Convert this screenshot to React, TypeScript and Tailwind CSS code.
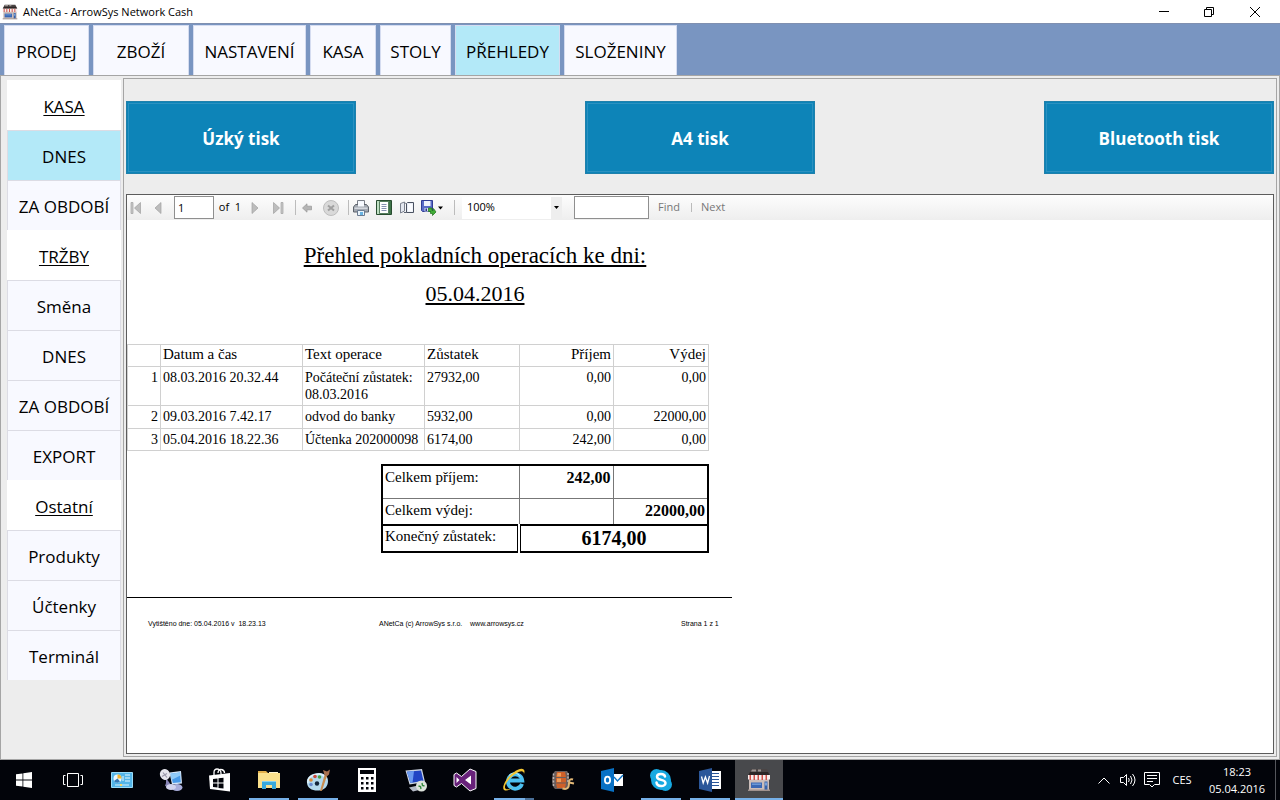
import type { ReactNode } from "react";

const tabs = [
  { label: "PRODEJ", width: "w-[85px]" },
  { label: "ZBOŽÍ", width: "w-24" },
  { label: "NASTAVENÍ", width: "w-[113px]" },
  { label: "KASA", width: "w-[66px]" },
  { label: "STOLY", width: "w-[71px]" },
  { label: "PŘEHLEDY", width: "w-[105px]", active: true },
  { label: "SLOŽENINY", width: "w-[113px]" },
];

const sidebar = [
  { title: "KASA", items: ["DNES", "ZA OBDOBÍ"], active: "DNES" },
  { title: "TRŽBY", items: ["Směna", "DNES", "ZA OBDOBÍ", "EXPORT"] },
  { title: "Ostatní", items: ["Produkty", "Účtenky", "Terminál"] },
];

const rows = [
  ["1", "08.03.2016 20.32.44", "Počáteční zůstatek: 08.03.2016", "27932,00", "0,00", "0,00"],
  ["2", "09.03.2016 7.42.17", "odvod do banky", "5932,00", "0,00", "22000,00"],
  ["3", "05.04.2016 18.22.36", "Účtenka 202000098", "6174,00", "242,00", "0,00"],
];

function ShopIcon({ className }: { className: string }) {
  return (
    <svg viewBox="0 0 24 24" className={className} aria-hidden="true">
      <path d="M4 1h16l3 6H1z" fill="#4a4444" />
      <path d="M3 4h18l1.5 3h-21z" fill="#2c2626" />
      <path d="M5 1.5h4v2H4zM11 1.5h3v2h-3z" fill="#9d9592" />
      <path d="M2 11h20v11H2z" fill="#cbbdb9" />
      <path d="M1 7h22v4.500H1z" fill="#f7eeee" />
      <path d="M2.500 7h1.500v5h-1.500zM6.500 7H8v5H6.500zM10.500 7H12v5h-1.500zM14.500 7H16v5h-1.500zM18.500 7H20v5h-1.500z" fill="#cf5149" />
      <path d="M4 14.500h11V20H4z" fill="#3a68b4" />
      <path d="M5 15.500h9v1.500H5z" fill="#6a98d6" />
      <path d="M17.500 13.500h3V22h-3z" fill="#3762a8" />
      <path d="M18 14.500h2v3h-2z" fill="#7aa3da" />
      <path d="M1 21.500h22V23H1z" fill="#a0928e" />
    </svg>
  );
}

function TitleBar() {
  return (
    <header className="flex h-[23px] items-center bg-white">
      <ShopIcon className="ml-[2px] h-4 w-4" />
      <h1 className="ml-[5px] flex-1 text-[11px] leading-4">ANetCa - ArrowSys Network Cash</h1>
      <button aria-label="Minimize" className="flex h-full w-12 items-center justify-center">
        <svg viewBox="0 0 10 10" className="h-[10px] w-[10px]"><path d="M0 4.500h10" stroke="#000" /></svg>
      </button>
      <button aria-label="Restore" className="flex h-full w-[42px] items-center justify-center">
        <svg viewBox="0 0 10 10" className="h-[10px] w-[10px]"><path d="M.5 2.500h7v7h-7zM2.500 2.500v-2h7v7h-2" fill="none" stroke="#000" /></svg>
      </button>
      <button aria-label="Close" className="flex h-full w-[50px] items-center justify-center">
        <svg viewBox="0 0 10 10" className="h-[10px] w-[10px]"><path d="M0 0l10 10M10 0L0 10" stroke="#000" /></svg>
      </button>
    </header>
  );
}

function Tabs() {
  return (
    <nav className="flex h-[52px] gap-1 border-t border-[#8090b0] bg-[#7995c1] pl-1 pt-px">
      {tabs.map((t) => (
        <button
          key={t.label}
          className={`${t.width} border-x border-t border-[#d5dcf0] pt-[2px] text-[17px] ${t.active ? "bg-[#b3e9f8]" : "bg-[#f8f9ff]"}`}
        >
          {t.label}
        </button>
      ))}
    </nav>
  );
}

function Sidebar() {
  return (
    <aside className="w-[114px] shrink-0 pt-1">
      {sidebar.map((group) => (
        <section key={group.title}>
          <h2 className="flex h-[50px] items-center justify-center bg-white pt-[3px] text-[17px] underline underline-offset-2">
            {group.title}
          </h2>
          {group.items.map((item) => (
            <button
              key={item}
              className={`block h-[50px] w-full border-x border-t border-[#dcdce4] pt-[2px] text-[17px] ${item === group.active ? "bg-[#b3e9f8]" : "bg-[#f8f9ff]"}`}
            >
              {item}
            </button>
          ))}
        </section>
      ))}
    </aside>
  );
}

function PrintButton({ children }: { children: ReactNode }) {
  return (
    <button className="h-[73px] w-[230px] border border-[#1f80ab] bg-[#0d84b8] p-px text-[17px] font-bold text-white">
      <span className="flex h-full items-center justify-center border border-[#2c91c0] pt-[2px]">{children}</span>
    </button>
  );
}

function Tool({ label, width, children }: { label: string; width: string; children: ReactNode }) {
  return (
    <button aria-label={label} className={`flex h-full shrink-0 items-center justify-center ${width}`}>
      {children}
    </button>
  );
}

function Separator({ width }: { width: string }) {
  return (
    <span className={`flex shrink-0 justify-center ${width}`}>
      <span className="h-[15px] w-px bg-[#bcbcbc]" />
    </span>
  );
}

function Toolbar() {
  return (
    <div className="flex h-[25px] items-center bg-gradient-to-b from-[#fdfdfd] to-[#eeeeee] text-[11px]">
      <Tool label="First page" width="w-[18px]">
        <svg viewBox="0 0 12 12" className="h-3 w-3"><path d="M1 .5h2v11H1z" fill="#c8c8c8" stroke="#a0a0a0" strokeWidth=".7" /><path d="M10.500 .5v11L4.500 6z" fill="#bdbdbd" stroke="#a0a0a0" strokeWidth=".7" /></svg>
      </Tool>
      <Tool label="Previous page" width="w-[26px]">
        <svg viewBox="0 0 12 12" className="h-3 w-3"><path d="M9 .5v11L3 6z" fill="#bdbdbd" stroke="#a0a0a0" strokeWidth=".7" /></svg>
      </Tool>
      <input aria-label="Page number" defaultValue="1" className="ml-[3px] h-[23px] w-10 border border-[#8f8f8f] bg-white px-[3px]" />
      <span className="w-8 whitespace-pre text-center">of  1</span>
      <Tool label="Next page" width="w-[18px]">
        <svg viewBox="0 0 12 12" className="h-3 w-3"><path d="M3 .5v11L9 6z" fill="#bdbdbd" stroke="#a0a0a0" strokeWidth=".7" /></svg>
      </Tool>
      <Tool label="Last page" width="w-7">
        <svg viewBox="0 0 12 12" className="h-3 w-3"><path d="M9 .5h2v11H9z" fill="#c8c8c8" stroke="#a0a0a0" strokeWidth=".7" /><path d="M1.500 .5v11L7.500 6z" fill="#bdbdbd" stroke="#a0a0a0" strokeWidth=".7" /></svg>
      </Tool>
      <Separator width="w-[6px]" />
      <Tool label="Back to parent report" width="w-[18px]">
        <svg viewBox="0 0 10 10" className="h-[10px] w-[10px]"><path d="M.5 5L5 .8v2.400h4.500v3.600H5v2.400z" fill="#b5b5b5" stroke="#969696" strokeWidth=".7" /></svg>
      </Tool>
      <Tool label="Stop" width="w-[30px]">
        <svg viewBox="0 0 16 16" className="h-4 w-4"><circle cx="8" cy="8" r="7.500" fill="#d9d9d9" stroke="#bdbdbd" /><path d="M5 5.500l6 5M11 5.500l-6 5" stroke="#a0a0a0" strokeWidth="2" /></svg>
      </Tool>
      <Separator width="w-1" />
      <Tool label="Print" width="w-[22px]">
        <svg viewBox="0 0 16 16" className="h-4 w-4">
          <path d="M4.500 .5h7v6h-7z" fill="#f2f6fc" stroke="#7a7f88" />
          <path d="M.5 7l2-2.500h11l2 2.500v5H.5z" fill="#a3a9b2" stroke="#5d636c" />
          <path d="M5 2h6v4.500H5z" fill="#f7faff" />
          <path d="M1.500 7.500h13V9h-13z" fill="#d4d8df" />
          <path d="M4.500 10.500h7v5h-7z" fill="#e8f3fb" stroke="#6b7b90" />
          <path d="M7 12h3v3H7z" fill="#69b3e2" />
        </svg>
      </Tool>
      <Tool label="Print layout" width="w-6">
        <svg viewBox="0 0 16 16" className="h-4 w-4">
          <path d="M.5 .5h15v14H.5z" fill="#6fa878" stroke="#284c30" />
          <path d="M1 1h2.500v13H1z" fill="#bfe0c3" />
          <path d="M12.500 1H15v13h-2.500z" fill="#3f7449" />
          <path d="M3.500 1.500h9v12h-9z" fill="#fff" stroke="#567e5e" />
          <path d="M5.500 4.500h5M5.500 6.500h5M5.500 8.500h5M5.500 10.500h5" stroke="#8490b0" />
        </svg>
      </Tool>
      <Tool label="Page setup" width="w-[22px]">
        <svg viewBox="0 0 16 16" className="h-4 w-4">
          <path d="M1.500 3.500l4-1.500v9l-4 2z" fill="#e4e8f0" stroke="#7c828f" />
          <path d="M5.500 2.500l2 1.500v8" fill="none" stroke="#7c828f" />
          <path d="M7.500 3.500l1-1h6v10h-7z" fill="#e9edf6" stroke="#4b5261" />
          <path d="M9 4h4.500v7.500H9z" fill="#fbfcff" />
          <path d="M5 12.500h2.500" stroke="#5b6272" />
        </svg>
      </Tool>
      <Tool label="Export" width="w-7">
        <svg viewBox="0 0 24 16" className="h-4 w-6">
          <path d="M1.500 .5h11v11h-10l-1-1z" fill="#5a6cc8" stroke="#303d94" />
          <path d="M4 1h6.500v5H4z" fill="#eef2fc" />
          <path d="M4.500 8h5v3.500h-5z" fill="#d6dcf0" />
          <path d="M5.500 8.500H7V11H5.500z" fill="#28358a" />
          <path d="M8.500 8h3.500v2.500h1.500V8.500L16 12l-3.500 3.500v-2h-2v-2h-2z" fill="#3fae35" stroke="#1e6f1a" strokeWidth=".7" />
          <path d="M18 6.500h5l-2.500 3z" fill="#000" />
        </svg>
      </Tool>
      <Separator width="w-4" />
      <div className="relative w-[100px]">
        <select aria-label="Zoom" className="block h-[22px] w-full appearance-none bg-white px-[5px] text-[11px]">
          <option>100%</option>
        </select>
        <span className="pointer-events-none absolute inset-y-0 right-0 flex w-[11px] items-center justify-center bg-[#eeeeee]">
          <svg viewBox="0 0 5 3" className="h-[3px] w-[5px]"><path d="M0 0h5L2.500 3z" /></svg>
        </span>
      </div>
      <input aria-label="Search text" className="ml-3 h-[23px] w-[75px] border border-[#8f8f8f] bg-white px-1" />
      <button className="ml-[9px] text-[#777]">Find</button>
      <span className="ml-[11px] h-[9px] w-px bg-[#bbb]" />
      <button className="ml-[9px] text-[#777]">Next</button>
    </div>
  );
}

function Report() {
  const cell = "border border-[#d0d0d0] px-[2px] align-top font-normal";
  const head = `${cell} pt-px text-[15px]`;
  const total = "border border-[#777] pt-[3px] align-top";
  return (
    <div className="w-[605px] font-['Liberation_Serif',serif]">
      <h2 className="ml-[175px] mt-[17px] w-[346px] text-center text-[22px] leading-[38px] underline underline-offset-2">
        <span className="flex justify-center whitespace-nowrap text-[23px] underline">Přehled pokladních operacích ke dni:</span>
        05.04.2016
      </h2>
      <table className="mt-[31px] w-[582px] table-fixed border-collapse text-[14px] leading-[17px]">
        <colgroup>
          <col className="w-[33px]" />
          <col className="w-[142px]" />
          <col className="w-[122px]" />
          <col className="w-[95px]" />
          <col className="w-[94px]" />
          <col className="w-[95px]" />
        </colgroup>
        <thead>
          <tr className="h-[22px]">
            <th className={head} />
            <th className={`${head} text-left`}>Datum a čas</th>
            <th className={`${head} text-left`}>Text operace</th>
            <th className={`${head} text-left`}>Zůstatek</th>
            <th className={`${head} text-right`}>Příjem</th>
            <th className={`${head} text-right`}>Výdej</th>
          </tr>
        </thead>
        <tbody>
          {rows.map((r, n) => (
            <tr key={r[0]} className={n === 0 ? "h-[39px]" : n === 1 ? "h-[23px]" : "h-[22px]"}>
              {r.map((text, i) => (
                <td key={i} className={`${cell} pt-[2px] ${i === 0 || i > 3 ? "text-right" : "text-left"}`}>{text}</td>
              ))}
            </tr>
          ))}
        </tbody>
      </table>
      <table className="ml-[254px] mt-[13px] w-[327px] table-fixed border-collapse border-2 border-black text-[15px] leading-[17px]">
        <colgroup>
          <col className="w-[137px]" />
          <col className="w-[94px]" />
          <col className="w-[95px]" />
        </colgroup>
        <tbody>
          <tr className="h-[33px]">
            <th className={`${total} px-[2px] text-left font-normal`}>Celkem příjem:</th>
            <td className={`${total} px-[2px] text-right text-[16px] font-bold`}>242,00</td>
            <td className={total} />
          </tr>
          <tr className="h-[27px]">
            <th className={`${total} px-[2px] text-left font-normal`}>Celkem výdej:</th>
            <td className={total} />
            <td className={`${total} px-[2px] text-right text-[16px] font-bold`}>22000,00</td>
          </tr>
          <tr className="h-[27px] border-t-2 border-black">
            <th className="px-[2px] pt-[2px] text-left align-top font-normal">Konečný zůstatek:</th>
            <td colSpan={2} className="border-l-4 border-double border-black pb-px text-center text-[20px] font-bold leading-[22px]">6174,00</td>
          </tr>
        </tbody>
      </table>
      <footer className="mt-11 flex border-t border-black pl-[21px] pt-[21px] font-['Liberation_Sans',sans-serif] text-[7px] leading-[9px]">
        <span className="w-[231px] whitespace-pre">Vytištěno dne: 05.04.2016 v  18.23.13</span>
        <span className="w-[302px] whitespace-pre">ANetCa (c) ArrowSys s.r.o.    www.arrowsys.cz</span>
        <span>Strana 1 z 1</span>
      </footer>
    </div>
  );
}

const apps: { name: string; state?: "open" | "split" | "active"; icon: ReactNode }[] = [
  {
    name: "Start",
    icon: <svg viewBox="0 0 16 16" className="h-4 w-4"><path d="M0 2.300l6.500-.9v6.200H0zM7.300 1.300L16 0v7.600H7.300zM0 8.400h6.500v6.200L0 13.700zM7.300 8.400H16V16l-8.700-1.300z" fill="#fff" /></svg>,
  },
  {
    name: "Task view",
    icon: <svg viewBox="0 0 20 14" className="h-[14px] w-5"><path d="M4.500 .5h11v13h-11zM2.500 2.500h-2v9h2M17.500 2.500h2v9h-2" fill="none" stroke="#fff" /></svg>,
  },
  {
    name: "Control panel",
    icon: (
      <svg viewBox="0 0 22 16" className="h-4 w-[22px]">
        <path d="M.5 .5h21v15H.5z" fill="#53b5e8" stroke="#9bdcf8" />
        <circle cx="6.500" cy="6.500" r="4" fill="#e9f8ff" />
        <path d="M6.500 2.500v4h4a4 4 0 0 0-4-4" fill="#f5b52d" />
        <path d="M6.500 6.500L3 9a4 4 0 0 0 6 .5z" fill="#3377b5" />
        <path d="M14 3h5M14 6h5M14 9h5M12 9V4" stroke="#e6f7ff" fill="none" />
        <path d="M4 13h14" stroke="#d8f1fc" />
        <path d="M9 12h2v2H9z" fill="#f7d76a" />
      </svg>
    ),
  },
  {
    name: "Network device",
    icon: (
      <svg viewBox="0 0 24 24" className="h-6 w-6">
        <ellipse cx="18" cy="19.500" rx="5.500" ry="3.500" fill="#a9aedb" />
        <path d="M10.500 4.500L22 3l1 12.500-10 1z" fill="#d5e7fb" />
        <path d="M11.500 5.700L21 4.400l.8 9.800-8 .9z" fill="#489ae8" />
        <path d="M11.500 5.700L21 4.400l.3 3-8.900 4.500z" fill="#8fcaf8" />
        <path d="M7 10l4 5.500 2 4.500-7-2 1-3z" fill="#8785b6" />
        <ellipse cx="6" cy="6.500" rx="5" ry="5.500" transform="rotate(-30 6 6.500)" fill="#e6e5ec" />
        <path d="M4 4.500l4 5M3 8.500l5-3" stroke="#9b98aa" strokeWidth="1.200" />
        <ellipse cx="12" cy="19" rx="5" ry="3" fill="#d2d4ee" />
      </svg>
    ),
  },
  {
    name: "Store",
    icon: (
      <svg viewBox="0 0 22 24" className="h-6 w-[22px]">
        <path d="M5 7V4.500C5 2 6.500 1 8 1s4 1 4 4v1M9 5c0-3 2-4 3.500-3.500C15 2 15.500 4 15.500 5" fill="none" stroke="#fff" strokeWidth="1.300" />
        <path d="M0 7.500L21 5v18.500L1 21z" fill="#fff" />
        <path d="M4 11l4.500-.5v4H4zM9.500 10.300l5-.6v4.800h-5zM4 15.500h4.500v4L4 19zM9.500 15.500h5v5l-5-.6z" fill="#02040a" />
      </svg>
    ),
  },
  {
    name: "File Explorer",
    state: "open",
    icon: (
      <svg viewBox="0 0 22 20" className="h-5 w-[22px]">
        <path d="M0 1h8l2 2h11v3H0z" fill="#e3b04b" />
        <path d="M0 3h22v15H0z" fill="#fae08c" />
        <path d="M11 2h9v1h-9z" fill="#fff6d5" />
        <path d="M4 19v-8h14v8h-4v-4H8v4z" fill="#38a9dc" />
        <path d="M4 11h14v1H4z" fill="#85d2ef" />
      </svg>
    ),
  },
  {
    name: "Paint",
    state: "open",
    icon: (
      <svg viewBox="0 0 24 24" className="h-6 w-6">
        <path d="M1 15C0 9 6 5 13 5c6 0 9 4 9 8 0 5-3 9-9 9.500C6 23 1.500 20 1 15" fill="#b3d9ee" />
        <path d="M2 15C1 9.500 7 6 13 6c4 0 7 3 7 6" fill="none" stroke="#e3f4fd" strokeWidth="1.500" />
        <circle cx="5" cy="12" r="1.800" fill="#dd8a35" />
        <circle cx="9" cy="8.500" r="1.800" fill="#ce4a3b" />
        <circle cx="13.500" cy="9" r="1.800" fill="#4a9f46" />
        <circle cx="5" cy="16.500" r="1.800" fill="#6a8bd0" />
        <circle cx="11" cy="15.500" r="2.200" fill="#10233a" />
        <path d="M14 23l4.500-16 2.500 .8-5 15z" fill="#c98d50" />
        <path d="M18.500 7l-1.500-5 4 1.500 3-2-1 5-2.300 2z" fill="#a8704f" />
      </svg>
    ),
  },
  {
    name: "Calculator",
    icon: (
      <svg viewBox="0 0 18 24" className="h-6 w-[18px]">
        <path d="M0 0h18v24H0z" fill="#fff" />
        <path d="M2 2h14v4H2zM3 9h2.500v2.500H3zM8 9h2.500v2.500H8zM13 9h2.500v2.500H13zM3 14h2.500v2.500H3zM8 14h2.500v2.500H8zM13 14h2.500v2.500H13zM3 19h2.500v2.500H3zM8 19h2.500v2.500H8zM13 19h2.500v2.500H13z" fill="#02040a" />
      </svg>
    ),
  },
  {
    name: "Remote Desktop",
    icon: (
      <svg viewBox="0 0 24 24" className="h-6 w-6">
        <path d="M1.500 2.500L18 1l3 13-15.500 2.500z" fill="#cbd4e2" />
        <path d="M3 3.700l14-1.300 2.500 10.400L6.500 15z" fill="#2145c4" />
        <path d="M3 3.700l7-.7-1.500 11.700-2 .3z" fill="#6b9bf0" />
        <path d="M5 19.500l9-2 3 4-8 2z" fill="#b4bac6" />
        <circle cx="17.500" cy="18" r="5.500" fill="#dde3dc" />
        <path d="M14.500 18l2 .5 .5 2.500M20.500 18l-2-.5-.5-2.500" stroke="#338b3e" strokeWidth="1.400" fill="none" />
      </svg>
    ),
  },
  {
    name: "Visual Studio",
    icon: (
      <svg viewBox="0 0 24 24" className="h-6 w-6">
        <path d="M17 1l6 2.500v17L17 23l-8.500-7.500-5 3.500L1 17.500v-11L3.500 5l5 3.500z" fill="#68217a" stroke="#fff" />
        <path d="M18 7.500v9L12 12zM3.500 9v6L6.500 12z" fill="#fff" />
      </svg>
    ),
  },
  {
    name: "Internet Explorer",
    state: "split",
    icon: (
      <svg viewBox="0 0 24 24" className="h-6 w-6">
        <path d="M20 15.800A7.200 7.200 0 1 1 20.300 12.500H7" fill="none" stroke="#4cc0f1" strokeWidth="3.800" />
        <path d="M7 7.500c3-3.500 9-3 11 1" fill="none" stroke="#c4efff" />
        <path d="M3 22.500C-1.500 21.500 3 10.500 11.500 4.500 17 0 22.500-.5 22.500 3.500c0 1-.2 1.800-.5 2.500C22 3 19 2 14 5.500 6 10 .5 19.500 4 21c2 .8 5-.5 7-2-3 3-6 4-8 3.500" fill="#f4c532" />
      </svg>
    ),
  },
  {
    name: "Movie Maker",
    icon: (
      <svg viewBox="0 0 24 20" className="h-5 w-6">
        <path d="M4 1h12l2 3v12l-2 3H4c-4-3-4-14 0-18" fill="#6a5d5b" />
        <path d="M6 2h8l1 5H5zM5 8h10v4.500H5zM5 13.500h10L14 18H6z" fill="#cf6029" />
        <path d="M6.500 3H10v3.500H6zM6 8.500h4v3.500H6z" fill="#ee9c58" />
        <path d="M2.500 3.500v13M17 3v9" stroke="#b9b5b5" strokeWidth="1.500" strokeDasharray="2 1.500" />
        <path d="M11.500 18.500c5 1.500 6.500-1 6.500-5s1.500-5 4-4M18 12.500l5 1" fill="none" stroke="#e2b877" strokeWidth="2" />
      </svg>
    ),
  },
  {
    name: "Outlook",
    icon: (
      <svg viewBox="0 0 24 24" className="h-6 w-6">
        <path d="M13 6h10v12H13z" fill="#fff" />
        <path d="M14 9l3.500 4 5.500-6" fill="none" stroke="#0871c5" strokeWidth="1.300" />
        <path d="M1 3l13-3v24L1 21z" fill="#0871c5" />
        <ellipse cx="7.500" cy="12" rx="2.600" ry="3.400" fill="none" stroke="#fff" strokeWidth="1.800" />
      </svg>
    ),
  },
  {
    name: "Skype",
    state: "open",
    icon: (
      <svg viewBox="0 0 24 24" className="h-6 w-6">
        <circle cx="12" cy="12" r="10" fill="#17a9e1" />
        <circle cx="7.500" cy="7.500" r="6.500" fill="#17a9e1" />
        <circle cx="16.500" cy="16.500" r="6.500" fill="#17a9e1" />
        <path d="M16 8.500C15.500 5 8 5 8 8.700c0 4.300 8.500 2 8.500 6.300 0 4-8.500 4-9-.5" fill="none" stroke="#fff" strokeWidth="2.500" strokeLinecap="round" />
      </svg>
    ),
  },
  {
    name: "Word",
    state: "open",
    icon: (
      <svg viewBox="0 0 24 24" className="h-6 w-6">
        <path d="M12 3h11v18H12z" fill="#fff" />
        <path d="M14 5.500h7M14 8.500h7M14 11.500h7M14 14.500h7M14 17.500h7" stroke="#2b579a" />
        <path d="M1 3l13-3v24L1 21z" fill="#2b579a" />
        <path d="M3.500 8.500l1.700 6.500 2.200-6 2.200 6 1.900-7" fill="none" stroke="#fff" strokeWidth="1.300" />
      </svg>
    ),
  },
  { name: "ANetCa", state: "active", icon: <ShopIcon className="h-6 w-6" /> },
];

function Taskbar() {
  return (
    <footer className="flex h-10 shrink-0 items-stretch bg-[#02040a] text-white">
      <div className="flex flex-1 gap-px">
        {apps.map((app) => (
          <button
            key={app.name}
            aria-label={app.name}
            className={`relative flex w-12 items-center justify-center ${app.state === "active" ? "bg-[#48494c]" : ""}`}
          >
            {app.icon}
            {app.state && (
              <span className={`absolute bottom-0 flex h-[2px] ${app.state === "active" ? "inset-x-0" : "inset-x-1"}`}>
                <span className="flex-1 bg-[#76b0e8]" />
                {app.state === "split" && <span className="w-[9px] bg-[#4a7099]" />}
              </span>
            )}
          </button>
        ))}
      </div>
      <div className="flex items-center text-[11px]">
        <button aria-label="Show hidden icons" className="w-6">
          <svg viewBox="0 0 12 7" className="mx-auto h-[7px] w-3"><path d="M.5 6.500L6 1l5.500 5.500" fill="none" stroke="#fff" /></svg>
        </button>
        <button aria-label="Volume" className="w-6">
          <svg viewBox="0 0 16 14" className="mx-auto h-[14px] w-4"><path d="M.5 4.500h3l3-3v11l-3-3h-3zM8.500 5q1.500 2 0 4M10.500 3q3 4 0 8M12.500 1q5 6 0 12" fill="none" stroke="#fff" /></svg>
        </button>
        <button aria-label="Notifications" className="w-6">
          <svg viewBox="0 0 16 16" className="mx-auto h-4 w-4"><path d="M.5 .5h15v12h-5L8 15l-2.500-2.500h-5zM3 3.500h10M3 6.500h10M3 9.500h6" fill="none" stroke="#fff" /></svg>
        </button>
        <button className="ml-[6px] w-6">CES</button>
        <div className="ml-3 mr-[7px] w-[62px] text-center leading-[17px]">
          <div>18:23</div>
          <div>05.04.2016</div>
        </div>
        <div className="h-full w-[5px] border-l border-[#55575c]" />
      </div>
    </footer>
  );
}

export default function App() {
  return (
    <div className="flex min-h-screen flex-col bg-[#ededed] font-['Open_Sans',sans-serif] text-black">
      <TitleBar />
      <Tabs />
      <div className="flex flex-1 gap-[2px] border border-[#a5a5a5] pl-[6px] pr-[2px]">
        <Sidebar />
        <main className="my-[2px] flex min-w-0 flex-1 flex-col border border-[#a5a5a5] px-[2px] pb-[2px] pt-[22px]">
          <div className="flex justify-between">
            <PrintButton>Úzký tisk</PrintButton>
            <PrintButton>A4 tisk</PrintButton>
            <PrintButton>Bluetooth tisk</PrintButton>
          </div>
          <section className="mt-5 flex-1 border border-[#5c5c5c] bg-white">
            <Toolbar />
            <Report />
          </section>
        </main>
      </div>
      <Taskbar />
    </div>
  );
}
